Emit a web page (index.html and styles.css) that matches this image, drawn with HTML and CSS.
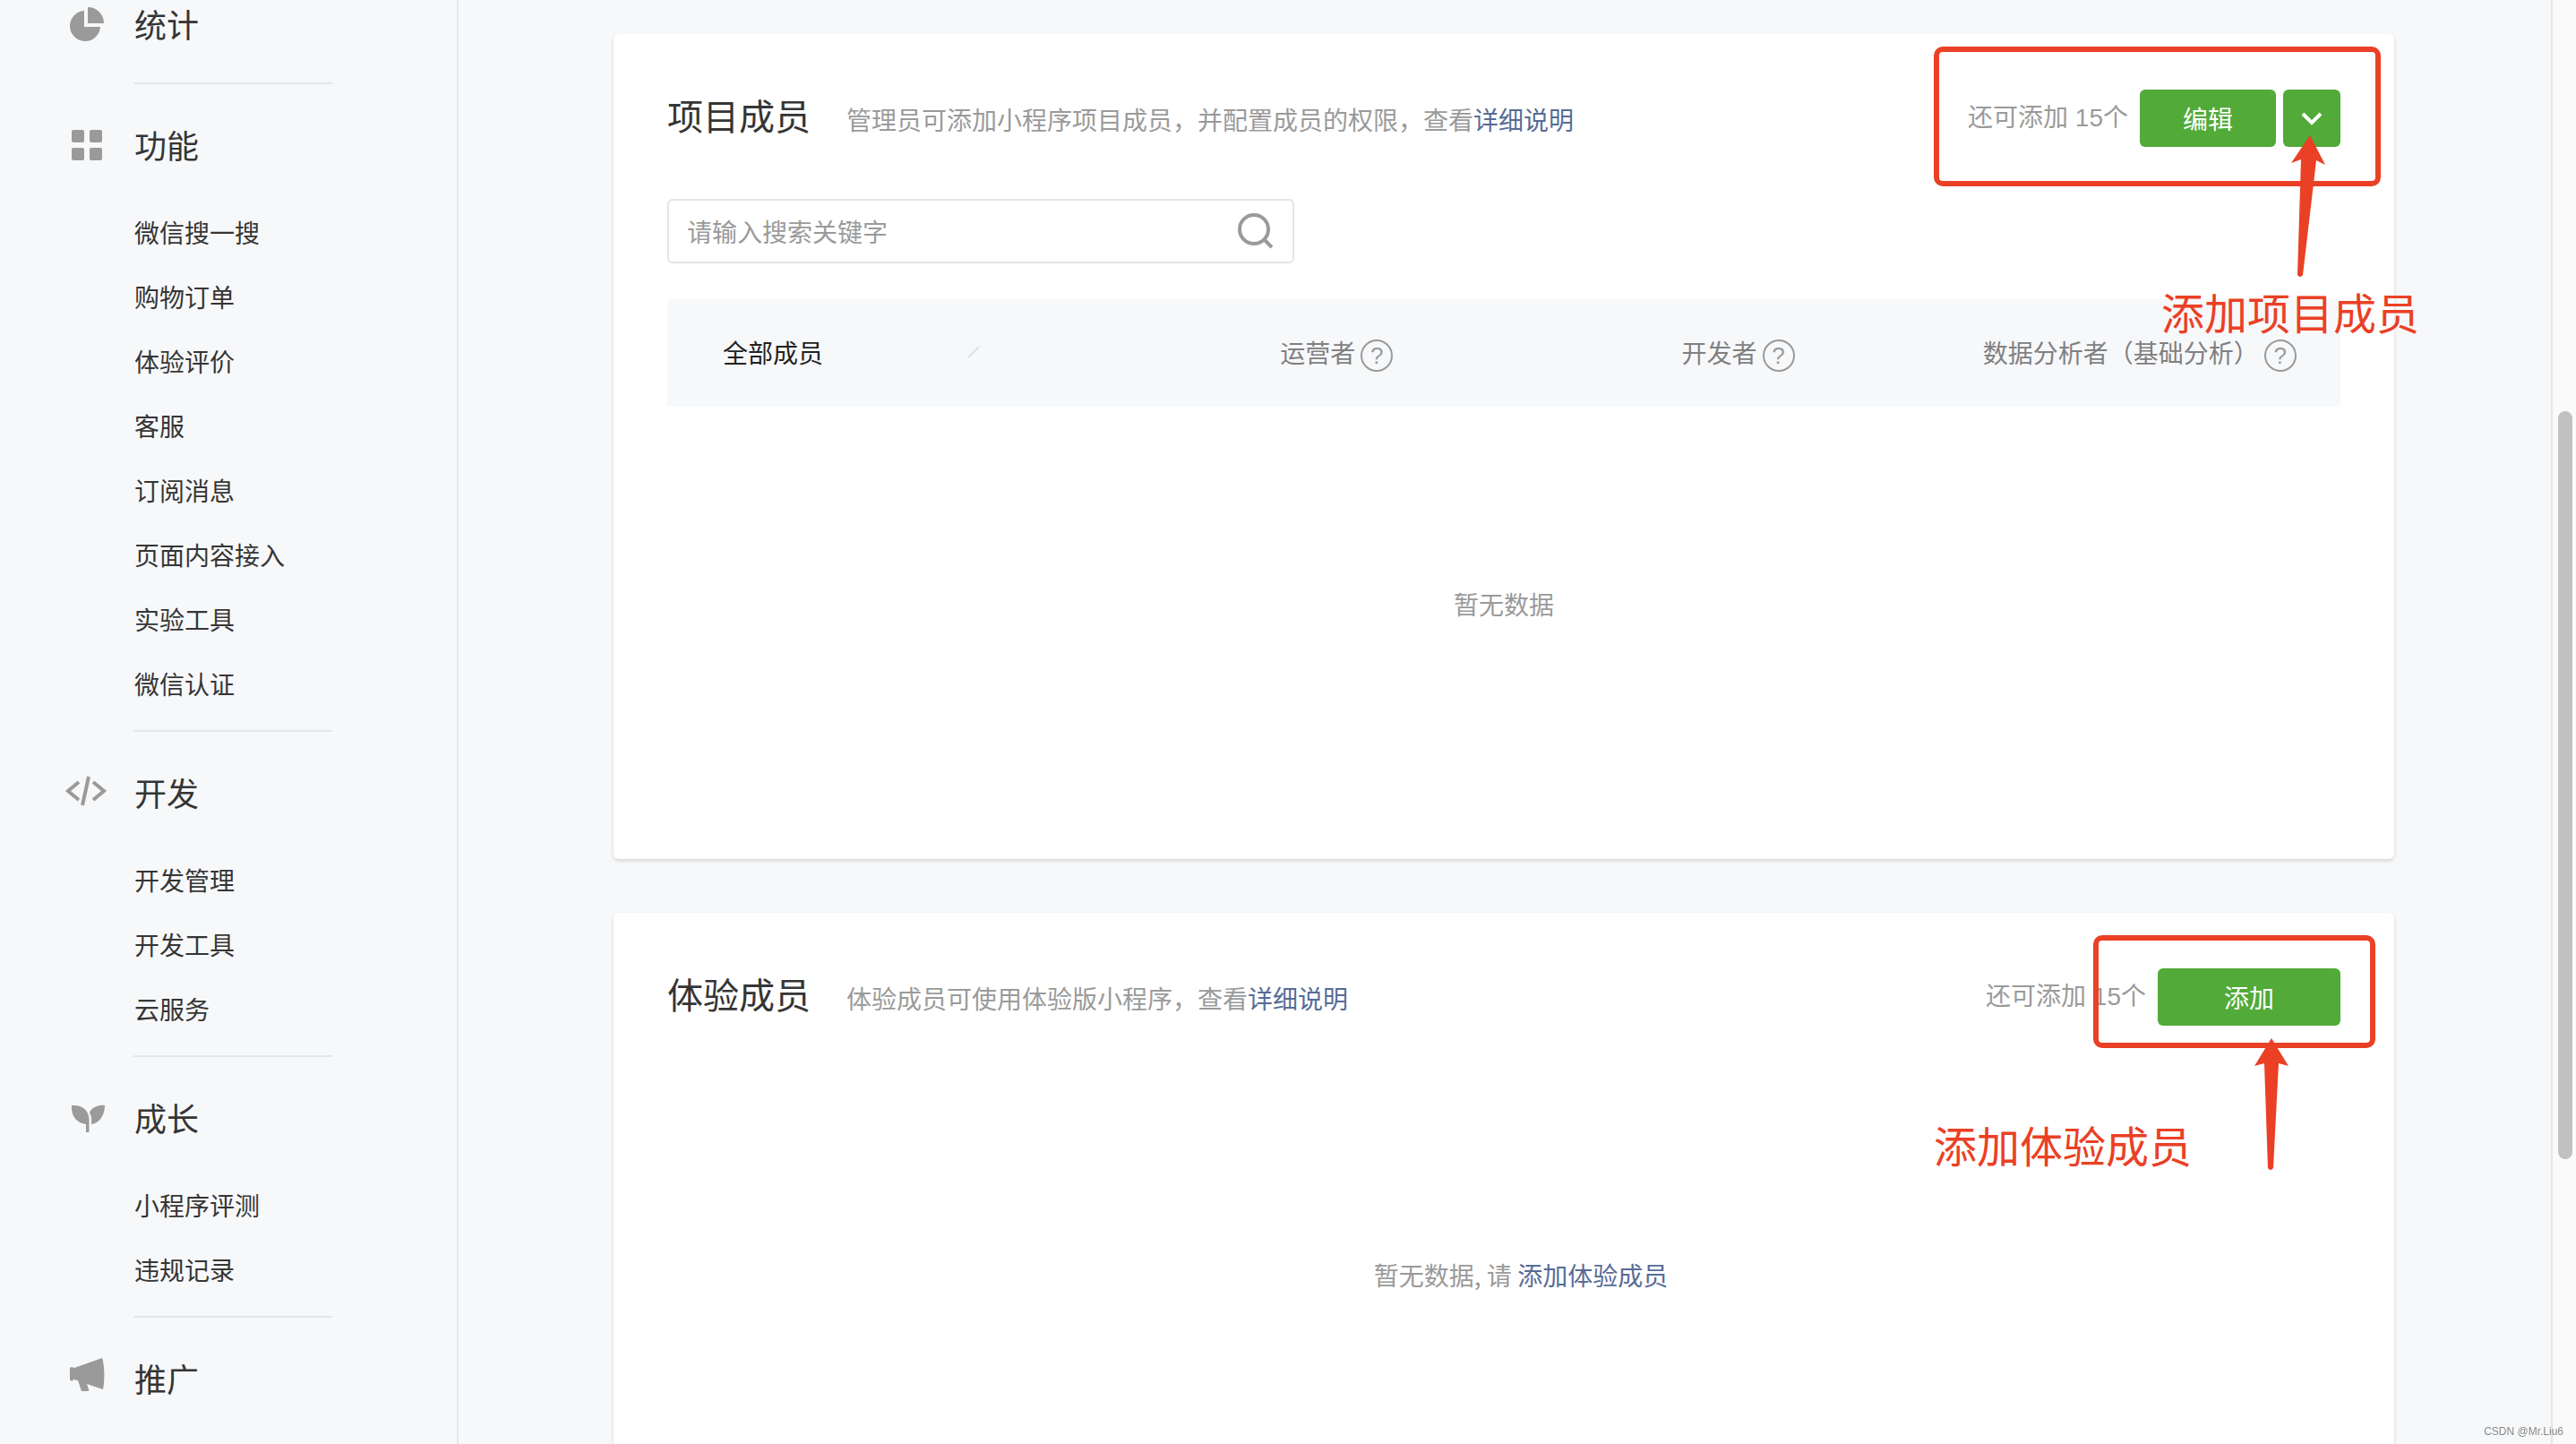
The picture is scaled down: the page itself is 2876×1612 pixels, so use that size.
FILE: index.html
```html
<!DOCTYPE html>
<html lang="zh-CN">
<head>
    <meta charset="UTF-8">
    <meta name="viewport" content="width=device-width, initial-scale=1.0">
    <title>成员管理</title>
    <link rel="stylesheet" href="styles.css">
</head>
<body>
    <div class="layout">
        <nav class="sidebar">
            <div class="menu-section">
                <h2 class="menu-title">
                    <svg class="menu-icon" viewBox="0 0 48 48"><path d="M22 8A17 17 0 1 0 40 26H22ZM26 4A18 18 0 0 1 44 22H26Z"/></svg>
                    统计
                </h2>
            </div>
            <div class="menu-section">
                <h2 class="menu-title">
                    <svg class="menu-icon" viewBox="0 0 48 48">
                        <rect x="8" y="6" width="14" height="14" rx="2"/>
                        <rect x="28" y="6" width="14" height="14" rx="2"/>
                        <rect x="8" y="26" width="14" height="14" rx="2"/>
                        <rect x="28" y="26" width="14" height="14" rx="2"/>
                    </svg>
                    功能
                </h2>
                <ul class="menu-list">
                    <li><a href="#">微信搜一搜</a></li>
                    <li><a href="#">购物订单</a></li>
                    <li><a href="#">体验评价</a></li>
                    <li><a href="#">客服</a></li>
                    <li><a href="#">订阅消息</a></li>
                    <li><a href="#">页面内容接入</a></li>
                    <li><a href="#">实验工具</a></li>
                    <li><a href="#">微信认证</a></li>
                </ul>
            </div>
            <div class="menu-section">
                <h2 class="menu-title">
                    <svg class="menu-icon line" viewBox="0 0 48 48"><path d="M16 11L4 21L16 31M32 11L44 21L32 31M27 5L20 37"/></svg>
                    开发
                </h2>
                <ul class="menu-list">
                    <li><a href="#">开发管理</a></li>
                    <li><a href="#">开发工具</a></li>
                    <li><a href="#">云服务</a></li>
                </ul>
            </div>
            <div class="menu-section">
                <h2 class="menu-title">
                    <svg class="menu-icon" viewBox="0 0 48 48"><path d="M8 9C19 8 27 14 27.500 24V39H24V30C14 29 7 21 8 9ZM45 9C37 8 30 12 28 17C30 20 30.500 24 30 30C39 29 45 20 45 9Z"/></svg>
                    成长
                </h2>
                <ul class="menu-list">
                    <li><a href="#">小程序评测</a></li>
                    <li><a href="#">违规记录</a></li>
                </ul>
            </div>
            <div class="menu-section">
                <h2 class="menu-title">
                    <svg class="menu-icon" viewBox="0 0 48 48"><path d="M6 11L8 10L11 11L42 0C45 8 45 26 43 35L25 29L27 35V37H19L15 25L10 24L8 26L6 24Z"/></svg>
                    推广
                </h2>
            </div>
        </nav>

        <main class="content">
            <section class="card">
                <div class="card-header">
                    <div class="card-heading">
                        <h1>项目成员</h1>
                        <p>管理员可添加小程序项目成员，并配置成员的权限，查看<a href="#">详细说明</a></p>
                    </div>
                    <div class="actions">
                        <span class="quota">还可添加 15个</span>
                        <button type="button" class="btn">编辑</button>
                        <button type="button" class="btn btn-arrow" aria-label="更多">
                            <svg viewBox="0 0 24 24"><path d="M2 7L12 17L22 7"/></svg>
                        </button>
                    </div>
                </div>

                <form class="search">
                    <input type="text" placeholder="请输入搜索关键字" aria-label="搜索">
                    <button type="button" aria-label="搜索">
                        <svg viewBox="0 0 40 40"><circle cx="19" cy="18" r="16"/><path d="M30 29L39 38"/></svg>
                    </button>
                </form>

                <table class="members">
                    <thead>
                        <tr>
                            <th class="col-all">
                                <div class="all-cell">
                                    <span>全部成员</span>
                                    <svg viewBox="0 0 12 12"><path d="M0 12L12 0"/></svg>
                                </div>
                            </th>
                            <th><div class="role">运营者<button type="button" class="help">?</button></div></th>
                            <th><div class="role">开发者<button type="button" class="help">?</button></div></th>
                            <th><div class="role">数据分析者（基础分析）<button type="button" class="help">?</button></div></th>
                        </tr>
                    </thead>
                    <tbody>
                        <tr><td colspan="4" class="empty">暂无数据</td></tr>
                    </tbody>
                </table>

                <div class="mark-box mark-box-project"></div>
                <svg class="mark-arrow mark-arrow-project" viewBox="0 0 40 160"><path d="M22 0L39 33L29 28L14 156Q11 160 8 156L12 27L1 31Z"/></svg>
                <div class="mark-text mark-text-project">添加项目成员</div>
            </section>

            <section class="card">
                <div class="card-header">
                    <div class="card-heading">
                        <h1>体验成员</h1>
                        <p>体验成员可使用体验版小程序，查看<a href="#">详细说明</a></p>
                    </div>
                    <div class="actions">
                        <span class="quota">还可添加 15个</span>
                        <button type="button" class="btn btn-wide">添加</button>
                    </div>
                </div>
                <p class="empty-tip">暂无数据, 请 <a href="#">添加体验成员</a></p>

                <div class="mark-box mark-box-trial"></div>
                <svg class="mark-arrow mark-arrow-trial" viewBox="0 0 40 148"><path d="M20 0L39 31L28 28L22 145Q19 149 16 145L12 28L1 31Z"/></svg>
                <div class="mark-text mark-text-trial">添加体验成员</div>
            </section>
        </main>

        <div class="scroll-track"><div class="scroll-thumb"></div></div>
    </div>
    <div class="watermark">CSDN @Mr.Liu6</div>
</body>
</html>
```
FILE: styles.css
```css
* {
    box-sizing: border-box;
}

body {
    margin: 0;
    background-color: #f7f8fa;
    color: #353535;
    font-family: "Noto Sans CJK SC", "Liberation Sans", sans-serif;
    font-size: 28px;
    font-weight: 400;
    line-height: 44px;
}

h1, h2, p, ul {
    margin: 0;
    padding: 0;
    font-weight: 400;
}

a {
    color: #576b95;
    text-decoration: none;
}

button, input {
    font: inherit;
}

button {
    border: none;
    padding: 0;
    cursor: pointer;
}

.layout {
    display: flex;
    height: 100vh;
    overflow: hidden;
}

/* Sidebar */
.sidebar {
    flex: 0 0 512px;
    border-right: 2px solid #e7e7eb;
}

.menu-section {
    padding: 39px 0 16px 72px;
}

.menu-section:first-child {
    padding-top: 0;
    padding-bottom: 40px;
}

.menu-section:first-child .menu-title {
    height: 52px;
}

.menu-section + .menu-section {
    border-top: 2px solid;
    border-image: linear-gradient(to right, transparent 150px, #e4e6e8 150px, #e4e6e8 370px, transparent 370px) 2;
}

.menu-title {
    display: flex;
    align-items: center;
    gap: 30px;
    height: 56px;
    font-size: 36px;
}

.menu-icon {
    width: 48px;
    height: 48px;
    margin-top: 4px;
    fill: #9a9a9a;
}

.menu-icon.line {
    fill: none;
    stroke: #9a9a9a;
    stroke-width: 4;
}

.menu-list {
    margin-top: 34px;
    padding-left: 78px;
    list-style: none;
}

.menu-list a {
    display: block;
    line-height: 72px;
    color: #353535;
}

/* Cards */
.content {
    flex: 1;
    padding: 38px 175px 0 173px;
}

.card {
    position: relative;
    margin-bottom: 60px;
    padding: 62px 60px 0;
    background-color: #fff;
    border-radius: 6px;
    box-shadow: 0 2px 4px rgba(0, 0, 0, 0.14);
}

.card-header {
    display: flex;
    justify-content: space-between;
    align-items: center;
    height: 64px;
}

.card-heading {
    display: flex;
    align-items: baseline;
    gap: 40px;
    margin-bottom: 4px;
}

.card-heading h1 {
    font-size: 40px;
}

.card-heading p {
    color: #9a9a9a;
}

.actions {
    display: flex;
    align-items: center;
    gap: 8px;
}

.quota {
    margin-right: 5px;
    color: #9a9a9a;
    font-family: "Liberation Sans", "Noto Sans CJK SC", sans-serif;
}

.btn {
    width: 152px;
    height: 64px;
    background-color: #52aa38;
    color: #fff;
    border-radius: 6px;
}

.btn-wide {
    width: 204px;
}

.btn-arrow {
    display: flex;
    justify-content: center;
    align-items: center;
    width: 64px;
}

.btn-arrow svg {
    width: 24px;
    height: 24px;
    fill: none;
    stroke: #fff;
    stroke-width: 4;
}

.search {
    display: flex;
    align-items: center;
    width: 700px;
    height: 72px;
    margin: 58px 0 40px;
    padding: 0 22px 0 18px;
    border: 2px solid #e4e5e9;
    border-radius: 6px;
}

.search input {
    flex: 1;
    border: none;
    outline: none;
    background: none;
}

.search input::placeholder {
    color: #9a9a9a;
}

.search button {
    width: 40px;
    height: 40px;
    background: none;
}

.search svg {
    display: block;
    fill: none;
    stroke: #9a9a9a;
    stroke-width: 4;
}

/* Members table */
.members {
    width: 100%;
    table-layout: fixed;
    border-collapse: collapse;
}

.members th {
    width: 24%;
    height: 120px;
    padding: 0 0 2px;
    background-color: #f7f8fa;
    color: #808080;
    font-weight: 400;
}

.members .col-all {
    width: 28%;
    padding-left: 62px;
    color: #222;
}

.all-cell {
    display: flex;
    align-items: center;
    gap: 162px;
}

.all-cell svg {
    width: 12px;
    height: 12px;
    stroke: #e0e0e0;
    stroke-width: 2;
}

.role {
    display: flex;
    justify-content: center;
    align-items: center;
    gap: 6px;
}

.help {
    width: 36px;
    height: 36px;
    margin-top: 8px;
    border: 2px solid #9a9a9a;
    border-radius: 50%;
    background: none;
    color: #9a9a9a;
    font-family: "Liberation Sans", sans-serif;
    font-size: 26px;
    line-height: 32px;
}

.empty {
    padding: 198px 0 263px;
    color: #9a9a9a;
    text-align: center;
}

.empty-tip {
    padding: 256px 0 263px 38px;
    color: #9a9a9a;
    text-align: center;
}

/* Red marks drawn over the cards */
.mark-box {
    position: absolute;
    border: 6px solid #ea4025;
    border-radius: 10px;
    pointer-events: none;
}

.mark-box-project {
    top: 14px;
    right: 15px;
    width: 499px;
    height: 156px;
}

.mark-box-trial {
    top: 25px;
    right: 21px;
    width: 315px;
    height: 126px;
}

.mark-arrow {
    position: absolute;
    width: 40px;
    fill: #ea4025;
    pointer-events: none;
}

.mark-arrow-project {
    top: 113px;
    right: 76px;
    height: 160px;
}

.mark-arrow-trial {
    top: 140px;
    right: 117px;
    height: 148px;
}

.mark-text {
    position: absolute;
    color: #ea4025;
    font-size: 48px;
    line-height: 64px;
    white-space: nowrap;
}

.mark-text-project {
    top: 277px;
    right: -28px;
}

.mark-text-trial {
    top: 226px;
    right: 226px;
}

/* Scrollbar */
.scroll-track {
    flex: 0 0 28px;
    padding: 459px 4px 0 6px;
    border-left: 2px solid #e6e6e6;
    background-color: #fafafa;
}

.scroll-thumb {
    height: 835px;
    border-radius: 8px;
    background-color: #c1c1c1;
}

.watermark {
    position: fixed;
    right: 14px;
    bottom: 6px;
    color: #888;
    font-size: 12px;
    font-family: "Liberation Sans", sans-serif;
    line-height: 16px;
}
```
